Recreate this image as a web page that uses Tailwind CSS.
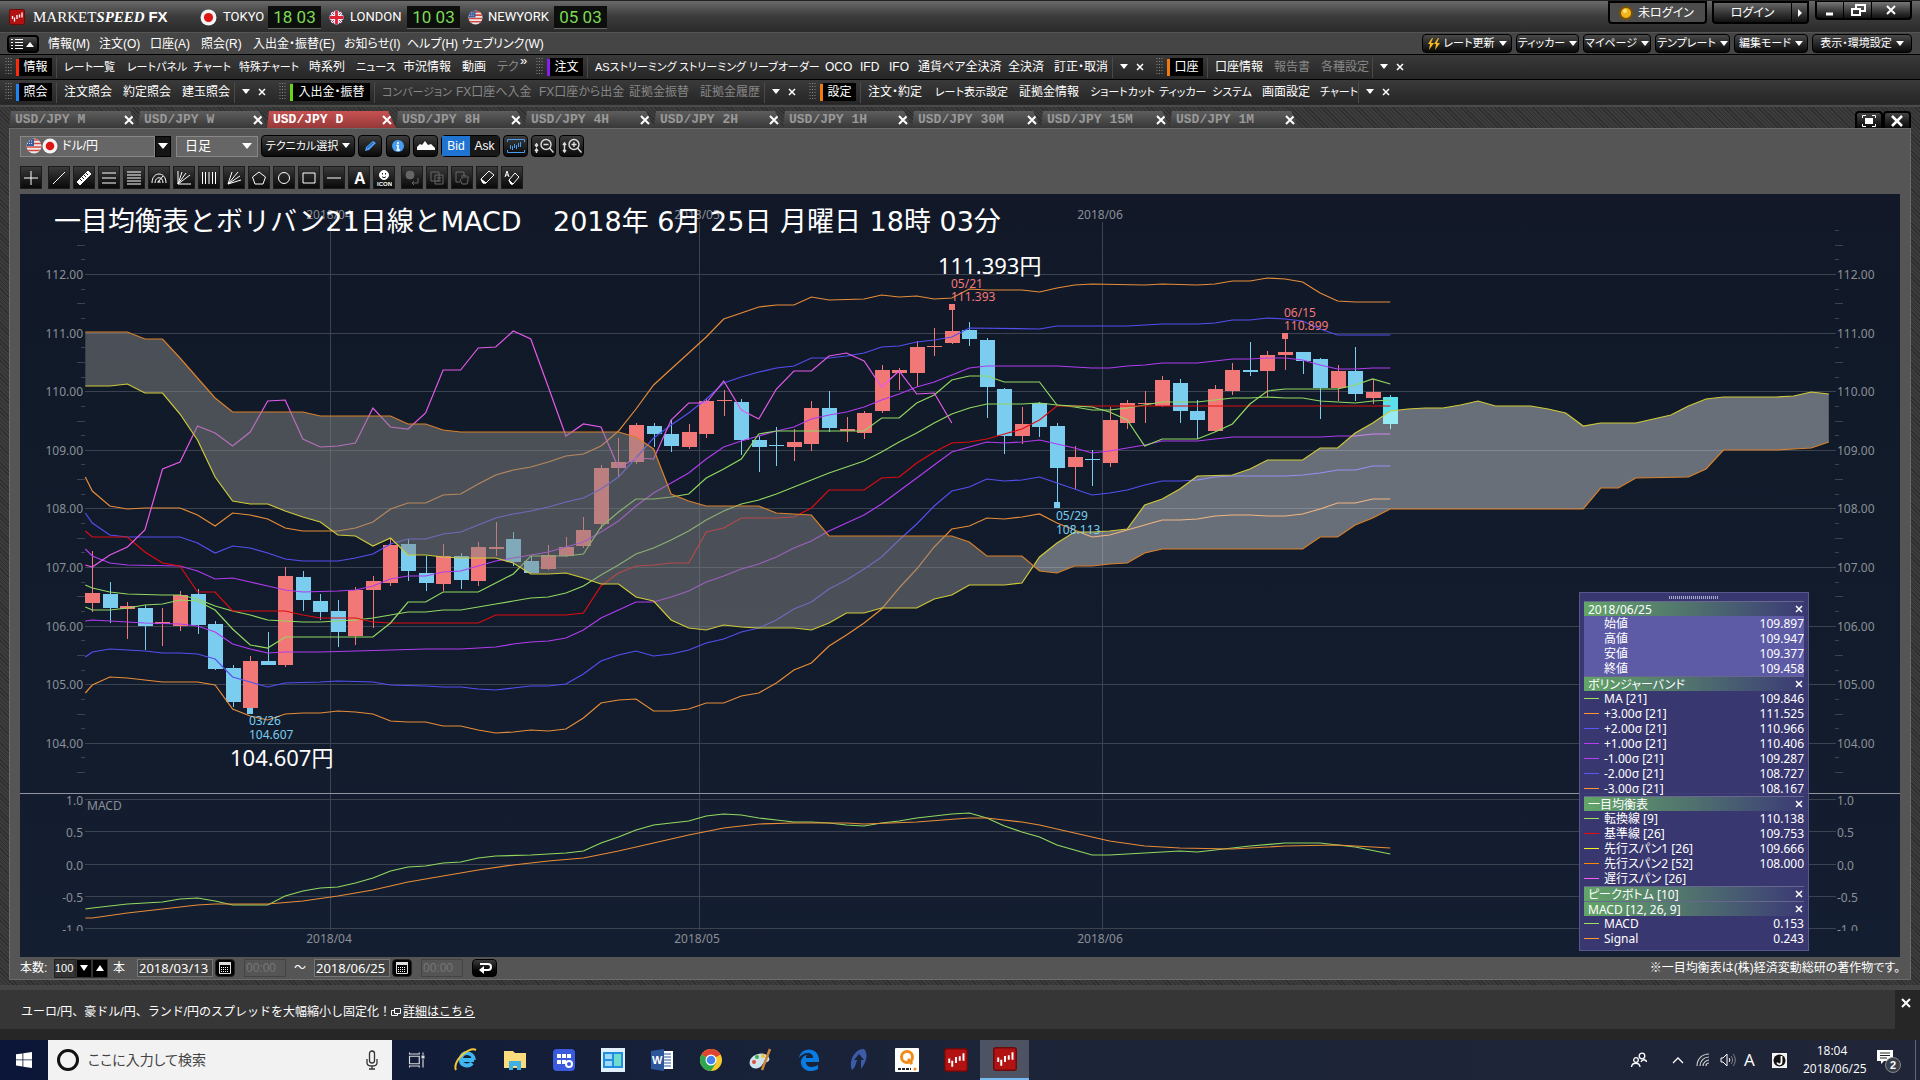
<!DOCTYPE html>
<html lang="ja">
  <head>
    <meta charset="UTF-8" />
    <meta name="viewport" content="width=device-width, initial-scale=1.0" />
    <script src="https://cdn.jsdelivr.net/npm/@tailwindcss/browser@4"></script>
    <title>MARKETSPEED FX</title>
  </head>
  <body
    class="w-full min-h-screen flex flex-col bg-[#2b2b2b] text-white text-xs overflow-hidden font-['Liberation_Sans','Noto_Sans_CJK_JP',sans-serif] [font-feature-settings:'palt']"
  >
    <!-- shared symbols -->
    <svg class="absolute size-0">
      <clipPath id="flagClip"><circle cx="8" cy="8" r="7.5" /></clipPath>
      <symbol id="jp" viewBox="0 0 16 16">
        <circle cx="8" cy="8" r="7.5" fill="#f4f4f4" />
        <circle cx="8" cy="8" r="4.3" fill="#dd1515" />
      </symbol>
      <symbol id="us" viewBox="0 0 16 16">
        <g clip-path="url(#flagClip)">
          <rect width="16" height="16" fill="#f1e9e6" />
          <path d="M0 2h16M0 5.500h16M0 9h16M0 12.500h16" stroke="#cf4a44" stroke-width="1.700" />
          <rect width="8" height="8" fill="#3c5c9c" />
          <path d="M1 3h6M1 5.500h6" stroke="#cfd8ee" stroke-dasharray="1 1" />
        </g>
      </symbol>
      <symbol id="uk" viewBox="0 0 16 16">
        <g clip-path="url(#flagClip)">
          <rect width="16" height="16" fill="#38509c" />
          <path d="M0 0l16 16M16 0L0 16" stroke="#fff" stroke-width="3" />
          <path d="M0 0l16 16M16 0L0 16" stroke="#d23" stroke-width="1" />
          <path d="M8 0v16M0 8h16" stroke="#fff" stroke-width="5" />
          <path d="M8 0v16M0 8h16" stroke="#d23" stroke-width="3" />
        </g>
      </symbol>
      <symbol id="ms" viewBox="0 0 16 16">
        <rect x=".5" y=".5" width="15" height="15" rx="1.5" fill="#b31212" stroke="#6d0b0b" />
        <path d="M3.500 7v3M5.500 8.500v4M8 6v4M10.500 5.500v3M13 3.500v5" stroke="#fff" stroke-width="1.300" />
      </symbol>
      <symbol id="cal" viewBox="0 0 14 14">
        <path d="M1 1h12v3H1z" fill="#ddd" />
        <path d="M1.500 4v8.500h11V4" fill="none" stroke="#ddd" />
        <path d="M3 6.500h8M3 8.500h8M3 10.500h8" stroke="#fff" stroke-dasharray="1 1" />
      </symbol>
    </svg>

    <!-- title bar -->
    <header
      class="h-8 flex items-start justify-between border-t border-[#222] bg-linear-to-b from-[#6a6a6a] via-[#3b3b3b] to-[#2b2b2b]"
    >
      <div class="flex items-center h-8 pl-[9px]">
        <svg class="size-4"><use href="#ms" /></svg>
        <h1 class="w-[175px] pl-2 text-[15px] whitespace-nowrap font-['Liberation_Serif',serif]">
          MARKET<b class="italic">SPEED</b>
          <b class="font-['Liberation_Sans',sans-serif]">FX</b>
        </h1>
        <svg class="size-[17px]"><use href="#jp" /></svg>
        <span class="w-[51px] pl-[6px] text-[13px] font-['Roboto',sans-serif]">TOKYO</span>
        <time class="w-[53px] h-[23px] mr-2 bg-[#0c0f0c] border-b border-[#666] text-[#7ed957] text-[17px] leading-[22px] text-center whitespace-nowrap font-['Roboto',sans-serif]">18 03</time>
        <svg class="size-[15px]"><use href="#uk" /></svg>
        <span class="w-[63px] pl-[6px] text-[13px] font-['Roboto',sans-serif]">LONDON</span>
        <time class="w-[53px] h-[23px] mr-2 bg-[#0c0f0c] border-b border-[#666] text-[#7ed957] text-[17px] leading-[22px] text-center whitespace-nowrap font-['Roboto',sans-serif]">10 03</time>
        <svg class="size-[15px]"><use href="#us" /></svg>
        <span class="w-[71px] pl-[5px] text-[13px] font-['Roboto',sans-serif]">NEWYORK</span>
        <time class="w-[53px] h-[23px] bg-[#0c0f0c] border-b border-[#666] text-[#7ed957] text-[17px] leading-[22px] text-center whitespace-nowrap font-['Roboto',sans-serif]">05 03</time>
      </div>
      <div class="flex items-start pr-2">
        <div class="flex items-center h-[23px] w-[99px] border-2 border-black rounded-b bg-[#4c4c4c] pl-2 gap-1">
          <svg class="size-4" viewBox="0 0 16 16"><circle cx="8" cy="8" r="6" fill="#f2b51c" stroke="#7a5205" stroke-width="2" /><circle cx="7" cy="6" r="2" fill="#ffe07a" /></svg>
          <span class="whitespace-nowrap">未ログイン</span>
        </div>
        <button class="ml-[5px] h-[23px] w-[80px] border-2 border-r border-black rounded-bl bg-linear-to-b from-[#666] to-[#111]">ログイン</button>
        <button class="h-[23px] w-[17px] border-2 border-l-0 border-black rounded-br bg-linear-to-b from-[#666] to-[#111] flex items-center justify-center" aria-label="メニュー">
          <svg class="w-1 h-2" viewBox="0 0 4 8"><path d="M0 0l4 4-4 4z" fill="#fff" /></svg>
        </button>
        <div class="ml-[6px] flex h-[19px] border-2 border-t border-black rounded-b bg-linear-to-b from-[#777] to-[#111]">
          <button class="w-[27px] border-r border-black flex justify-center" aria-label="最小化"><svg class="size-4" viewBox="0 0 16 16"><path d="M4 12h7" stroke="#fff" stroke-width="3" /></svg></button>
          <button class="w-[28px] border-r border-black flex justify-center" aria-label="元に戻す"><svg class="size-4" viewBox="0 0 16 16" fill="none" stroke="#fff" stroke-width="2"><path d="M6 8V3h9v6h-4M2 7h8v6H2z" /></svg></button>
          <button class="w-[38px] flex justify-center" aria-label="閉じる"><svg class="size-4" viewBox="0 0 16 16"><path d="M4 4l8 8M12 4l-8 8" stroke="#fff" stroke-width="2" /></svg></button>
        </div>
      </div>
    </header>

    <!-- menu bar -->
    <div class="h-[22px] flex items-center justify-between pl-[7px] pr-2 border-t border-[#555] bg-[#454545]">
      <nav class="flex items-center" id="menu">
        <button class="w-8 h-[18px] mr-[9px] border-2 border-black rounded bg-linear-to-b from-[#4a4a4a] to-[#0a0a0a] flex items-center justify-center" aria-label="表示">
          <svg class="w-6 h-3" viewBox="0 0 24 12"><path d="M0 1.500h2M4 1.500h8M0 4.500h2M4 4.500h8M0 7.500h2M4 7.500h8M0 10.500h2M4 10.500h8" stroke="#fff" /><path d="M15 9l4-5 4 5z" fill="#fff" /></svg>
        </button>
      </nav>
      <div class="flex gap-1" id="rightMenu"></div>
    </div>

    <!-- tool bars -->
    <div class="h-[25px] flex border-t border-black bg-linear-to-b from-[#3a3a3a] to-[#262626]" id="bar1"></div>
    <div class="h-[25px] flex border-t border-black bg-linear-to-b from-[#3a3a3a] to-[#262626]" id="bar2"></div>

    <!-- chart window -->
    <main class="mt-px px-[9px] pt-1 pb-[5px] border-t-2 border-[#4a4a4a] bg-[repeating-linear-gradient(45deg,#2e2e2e_0_1px,#3c3c3c_1px_3px)]">
      <div class="flex justify-between h-[17px]">
        <div class="flex" id="tabs"></div>
        <div class="flex">
          <button class="w-[28px] border-2 border-b-0 border-black rounded-t bg-linear-to-b from-[#444] to-[#0a0a0a] flex items-center justify-center" aria-label="最大化"><svg class="size-3.5" viewBox="0 0 14 14"><path d="M3 4h8v6H3z" fill="#fff" /><path d="M.5 4V1.500H4M10 1.500h3.500V4M13.500 10v2.500H10M4 12.500H.500V10" fill="none" stroke="#fff" /></svg></button>
          <button class="w-[28px] border-2 border-b-0 border-black rounded-t bg-linear-to-b from-[#444] to-[#0a0a0a] flex items-center justify-center" aria-label="チャートを閉じる"><svg class="size-3" viewBox="0 0 12 12"><path d="M1 1l10 10M11 1L1 11" stroke="#fff" stroke-width="2.500" /></svg></button>
        </div>
      </div>

      <div class="bg-[#555] border border-[#6a6a6a] px-[10px] pt-[6px]">
        <div class="flex items-center h-[22px]">
          <div class="flex items-center w-[135px] h-[21px] border border-[#888] bg-[#666] pl-[5px]">
            <svg class="size-4"><use href="#us" /></svg>
            <svg class="size-4"><use href="#jp" /></svg>
            <select class="appearance-none pl-1 flex-1 h-full outline-none" aria-label="通貨ペア"><option>ドル/円</option></select>
          </div>
          <span class="w-4 h-[21px] bg-[#151515] border border-black flex items-center justify-center"><svg class="w-2.5 h-1.5" viewBox="0 0 10 6"><path d="M0 0h10L5 6z" fill="#fff" /></svg></span>
          <div class="flex items-center ml-[5px] w-[82px] h-[21px] border border-[#888] bg-[#666] pr-[5px]">
            <select class="appearance-none pl-2 flex-1 h-full outline-none text-[13px]" aria-label="足種"><option>日足</option></select>
            <svg class="w-2.5 h-1.5" viewBox="0 0 10 6"><path d="M0 0h10L5 6z" fill="#fff" /></svg>
          </div>
          <button class="ml-[3px] w-[94px] h-[22px] border border-black rounded-sm bg-linear-to-b from-[#3c3c3c] to-[#0a0a0a] flex items-center justify-center gap-1 whitespace-nowrap text-[11px]">テクニカル選択<svg class="w-2 h-1.5" viewBox="0 0 8 6"><path d="M0 0h8L4 5z" fill="#fff" /></svg></button>
          <button class="ml-[3px] w-6 h-[22px] border border-black rounded-sm bg-linear-to-b from-[#3c3c3c] to-[#0a0a0a] flex items-center justify-center" aria-label="描画"><svg class="size-4" viewBox="0 0 16 16"><path d="M3 13l1-4 7-6 3 2-7 7z" fill="#4a9cf0" /><path d="M5 10l6-5" stroke="#1a4f92" /></svg></button>
          <button class="ml-[4px] w-6 h-[22px] border border-black rounded-sm bg-linear-to-b from-[#3c3c3c] to-[#0a0a0a] flex items-center justify-center" aria-label="情報"><svg class="size-4" viewBox="0 0 16 16"><circle cx="8" cy="8" r="6" fill="#4a9cf0" /><path d="M8 4v2M6.500 7.500H8V12M6.500 12h3.500" stroke="#fff" stroke-width="1.600" fill="none" /></svg></button>
          <button class="ml-[3px] w-[25px] h-[22px] border border-black rounded-sm bg-linear-to-b from-[#3c3c3c] to-[#0a0a0a] flex items-center justify-center" aria-label="エリア"><svg class="w-[18px] h-4" viewBox="0 0 18 16"><path d="M0 12V9l3-3 2 1 3-4 3 4 3-1 4 4v2z" fill="#fff" /></svg></button>
          <div class="ml-[3px] flex h-[22px] w-[59px] border border-black rounded-sm">
            <button class="w-[28px] bg-[#1f74d2]">Bid</button>
            <button class="flex-1 bg-[#181818]">Ask</button>
          </div>
          <button class="ml-[3px] w-[25px] h-[22px] border border-black rounded-sm bg-linear-to-b from-[#3c3c3c] to-[#0a0a0a] flex items-center justify-center" aria-label="全体表示"><svg class="w-[18px] h-4" viewBox="0 0 18 16" fill="none" stroke="#4a9cf0"><path d="M.5 4V1.500h17V4M.5 12v2.500h17V12M3.500 7v4M5.500 8v4M7.500 6v4M9.500 7v4M11.500 5v4M13.500 4v5" /></svg></button>
          <button class="ml-[3px] w-[25px] h-[22px] border border-black rounded-sm bg-linear-to-b from-[#3c3c3c] to-[#0a0a0a] flex items-center justify-center" aria-label="縮小"><svg class="w-[20px] h-4" viewBox="0 0 20 16" fill="none" stroke="#ddd" stroke-width="1.400"><circle cx="12" cy="6.500" r="5" /><path d="M9.500 6.500h5M15.500 10l4 4.500M2.500 5v2.500M1 6.500l1.500 2L4 6.500M2.500 15v-3M1 13l1.500-2L4 13" /></svg></button>
          <button class="ml-[3px] w-[25px] h-[22px] border border-black rounded-sm bg-linear-to-b from-[#3c3c3c] to-[#0a0a0a] flex items-center justify-center" aria-label="拡大"><svg class="w-[20px] h-4" viewBox="0 0 20 16" fill="none" stroke="#ddd" stroke-width="1.400"><circle cx="12" cy="6.500" r="5" /><path d="M9.500 6.500h5M12 4v5M15.500 10l4 4.500M2.500 5v9M1 7l1.500-2L4 7M1 12l1.500 2L4 12" /></svg></button>
        </div>

        <div class="flex gap-[3px] mt-[9px] mb-[5px]" id="drawTools"></div>

        <div class="relative">
          <svg id="chart" class="block w-full h-auto font-['Noto_Sans','Noto_Sans_CJK_JP',sans-serif] [font-feature-settings:normal]" viewBox="20 194 1880 763"></svg>
          <table class="absolute right-[91px] bottom-[6px] w-[230px] border-separate border-spacing-0 border border-[#57578c] bg-[#3b3974]/95 px-1 pb-1 leading-[15px] font-['Noto_Sans','Noto_Sans_CJK_JP',sans-serif]">
            <caption class="hidden">2018/06/25</caption>
            <tbody id="legend">
              <tr><td colspan="3" class="h-2 p-0"><svg class="block w-[50px] h-[3px] mx-auto" viewBox="0 0 50 3"><path d="M0 1.500h50" stroke="#aaa9cc" stroke-width="3" stroke-dasharray="1 1" /></svg></td></tr>
            </tbody>
          </table>
        </div>

        <form class="flex items-center h-[22px]" onsubmit="return false">
          <label for="bars" class="w-[34px] whitespace-nowrap">本数:</label>
          <input id="bars" value="100" class="w-[22px] h-[19px] bg-[#333] border border-[#222] text-[11px] outline-none" />
          <button class="w-4 h-[19px] bg-black border border-[#333] flex items-center justify-center" aria-label="減らす"><svg class="size-2" viewBox="0 0 8 8"><path d="M0 1h8L4 7z" fill="#fff" /></svg></button>
          <button class="w-4 h-[19px] bg-black border border-[#333] flex items-center justify-center" aria-label="増やす"><svg class="size-2" viewBox="0 0 8 8"><path d="M0 7h8L4 1z" fill="#fff" /></svg></button>
          <span class="w-[29px] pl-[5px]">本</span>
          <input value="2018/03/13" aria-label="開始日" class="w-[76px] h-[18px] bg-[#444] border border-[#777] pl-px text-[13px] outline-none font-['Noto_Sans',sans-serif]" />
          <button class="ml-[2px] w-5 h-[18px] bg-black border border-[#222] rounded-sm flex items-center justify-center" aria-label="開始日を選択"><svg class="size-3.5"><use href="#cal" /></svg></button>
          <input value="00:00" disabled aria-label="開始時刻" class="ml-[9px] w-[42px] h-[18px] border border-[#444] text-[#777] pl-px outline-none" />
          <span class="w-7 text-center">～</span>
          <input value="2018/06/25" aria-label="終了日" class="w-[76px] h-[18px] bg-[#444] border border-[#777] pl-px text-[13px] outline-none font-['Noto_Sans',sans-serif]" />
          <button class="ml-[2px] w-5 h-[18px] bg-black border border-[#222] rounded-sm flex items-center justify-center" aria-label="終了日を選択"><svg class="size-3.5"><use href="#cal" /></svg></button>
          <input value="00:00" disabled aria-label="終了時刻" class="ml-[9px] w-[42px] h-[18px] border border-[#444] text-[#777] pl-px outline-none" />
          <button class="ml-[9px] w-[25px] h-[18px] bg-linear-to-b from-[#3c3c3c] to-black border border-black rounded-sm flex items-center justify-center" aria-label="適用"><svg class="size-3.5" viewBox="0 0 14 14"><path d="M2 3h8a2.500 2.500 0 010 6H5" fill="none" stroke="#fff" stroke-width="2" /><path d="M6 5v8L1 9z" fill="#fff" /></svg></button>
          <span class="ml-auto whitespace-nowrap">※一目均衡表は(株)経済変動総研の著作物です。</span>
        </form>
      </div>
    </main>

    <!-- news line -->
    <section class="flex-1 flex border-t-[5px] border-b-[11px] border-t-[#454545] border-b-[#262626] bg-[#363636]">
      <p class="flex-1 flex items-center pl-[21px] pt-1 [font-feature-settings:normal]">
        ユーロ/円、豪ドル/円、ランド/円のスプレッドを大幅縮小し固定化！
        <svg class="size-[10px] mr-[2px]" viewBox="0 0 10 10" fill="none" stroke="#fff"><path d="M3.500 1.500h6v5h-6zM3 3.500H.500v5h6V7" /></svg>
        <a href="#" class="underline">詳細はこちら</a>
      </p>
      <button class="w-[25px] pt-2 pr-1 bg-[#262626] flex justify-center" aria-label="お知らせを閉じる"><svg class="size-2.5" viewBox="0 0 10 10"><path d="M1 1l8 8M9 1L1 9" stroke="#fff" stroke-width="2" /></svg></button>
    </section>

    <!-- taskbar -->
    <footer class="h-10 flex items-center bg-linear-to-r from-[#0b1638] via-[#1b2438] to-[#202538]">
      <button class="w-12 flex justify-center" aria-label="スタート"><svg class="size-4" viewBox="0 0 16 16" fill="#fff"><path d="M0 2.300l6.500-.9v6.100H0zM7.300 1.300L16 0v7.500H7.300zM0 8.300h6.500v6.200L0 13.600zM7.300 8.300H16V16l-8.700-1.200z" /></svg></button>
      <label class="w-[344px] h-10 bg-[#f2f2f2] flex items-center pl-2">
        <svg class="size-6" viewBox="0 0 24 24"><circle cx="12" cy="12" r="9.500" fill="none" stroke="#111" stroke-width="3" /></svg>
        <input placeholder="ここに入力して検索" class="flex-1 pl-2 text-[14px] outline-none placeholder:text-[#444]" />
        <svg class="w-4 h-5 mr-3" viewBox="0 0 16 20" fill="none" stroke="#333" stroke-width="1.300"><rect x="5.500" y="1" width="5" height="12" rx="2.500" /><path d="M3 9v4c0 4 10 4 10 0V9M8 16v3M5 19h6" /></svg>
      </label>
      <div class="flex h-10" id="apps"></div>
      <div class="ml-auto flex items-center h-10 border-r border-[#667] mr-1">
        <svg class="w-[18px] h-4 mr-6" viewBox="0 0 18 16" fill="none" stroke="#fff" stroke-width="1.300"><circle cx="12" cy="4" r="2.800" /><path d="M11 10c1-3 5-3 5.500 0" /><circle cx="6" cy="8" r="2.300" /><path d="M1.500 15c.5-5 8-5 8.500 0" /></svg>
        <svg class="w-3 h-2 mr-3" viewBox="0 0 12 8"><path d="M1 7l5-5 5 5" fill="none" stroke="#fff" stroke-width="1.300" /></svg>
        <svg class="size-3.5 mr-2.5" viewBox="0 0 14 14" fill="none" stroke="#ccc" stroke-width="1.200"><path d="M1 13C1 6 6 1 13 1M4 13c0-5 4-9 9-9M7 13c0-3 3-6 6-6M10 13c0-2 1-3 3-3" /></svg>
        <svg class="w-4 h-3.5 mr-2" viewBox="0 0 16 14" fill="none" stroke="#fff"><path d="M1 5h2l4-4v12L3 9H1zM9 5c1 1 1 3 0 4" /><path d="M11 3c2 2 2 6 0 8M13 1c3 3 3 9 0 12" stroke="#888" /></svg>
        <span class="w-7 text-[17px] font-['Open_Sans',sans-serif]">A</span>
        <svg class="size-[15px] mr-4" viewBox="0 0 15 15"><rect width="15" height="15" fill="#f4f4f4" /><circle cx="7.500" cy="7.500" r="6" fill="#111" /><path d="M9.500 3v6c0 3-4 3-4 .5" fill="none" stroke="#fff" stroke-width="1.800" /></svg>
        <div class="w-[58px] text-center leading-[18px] font-['Open_Sans',sans-serif] [font-feature-settings:normal]">18:04<br />2018/06/25</div>
        <svg class="w-6 h-6 ml-4 mr-[14px] mt-1" viewBox="0 0 24 24"><path d="M0 0h16v11H7l-3 3v-3H0z" fill="#fff" /><path d="M3 3h10M3 5.500h10M3 8h7" stroke="#222" /><circle cx="16" cy="15" r="7.500" fill="#3a3f4c" stroke="#888" /><text x="13" y="19" font-size="11" font-weight="bold" fill="#fff">2</text></svg>
      </div>
    </footer>

    <script>
      const $ = (id) => document.getElementById(id);
      const add = (id, html) => $(id).insertAdjacentHTML("beforeend", html);
      const down = '<svg class="w-2 h-1.5 shrink-0" viewBox="0 0 8 6"><path d="M0 0h8L4 5z" fill="#fff"/></svg>';
      const cross = '<svg class="size-2" viewBox="0 0 8 8"><path d="M1 1l6 6M7 1L1 7" stroke="#fff" stroke-width="1.500"/></svg>';

      // menu
      [["情報(M)", 51], ["注文(O)", 51], ["口座(A)", 51], ["照会(R)", 52], ["入出金・振替(E)", 91], ["お知らせ(I)", 63], ["ヘルプ(H)", 55], ["ウェブリンク(W)", 70]].forEach(([t, w]) =>
        add("menu", `<a href="#" class="whitespace-nowrap" style="width:${w}px">${t}</a>`)
      );
      [["レート更新", 90, 1], ["ティッカー", 63], ["マイページ", 68], ["テンプレート", 75], ["編集モード", 74], ["表示・環境設定", 100]].forEach(([t, w, bolt]) =>
        add("rightMenu", `<button class="h-[19px] border border-black rounded-sm bg-linear-to-b from-[#4a4a4a] to-[#0a0a0a] flex items-center justify-center gap-1 whitespace-nowrap text-[11px] leading-none" style="width:${w}px">${bolt ? '<svg class="size-3" viewBox="0 0 12 12"><path d="M4 0L0 6h2L1 12l5-7H3l2-5zM10 0L6 6h2l-1 6 5-7H9l2-5z" fill="#f5b81d"/></svg>' : ""}${t}${down}</button>`)
      );

      // tool bar groups: title, colour, title width, group width, items [label, width, dimmed]
      const bars = {
        bar1: [
          ["情報", "#ff2a0a", 33, 531, [["レート一覧", 63], ["レートパネル", 66], ["チャート", 46], ["特殊チャート", 70], ["時系列", 47], ["ニュース", 47], ["市況情報", 59], ["動画", 35], ["テク", 23, 1]], "more"],
          ["注文", "#8a1cf0", 33, 620, [["ASストリーミング", 84], ["ストリーミング", 70], ["リーブオーダー", 76], ["OCO", 35], ["IFD", 29], ["IFO", 29], ["通貨ペア全決済", 90], ["全決済", 46], ["訂正・取消", 58]]],
          ["口座", "#f07a10", 33, 300, [["口座情報", 59], ["報告書", 47, 1], ["各種設定", 51, 1]]],
        ],
        bar2: [
          ["照会", "#1b86f5", 33, 274, [["注文照会", 59], ["約定照会", 59], ["建玉照会", 52]]],
          ["入出金・振替", "#6ad414", 77, 530, [["コンバージョン", 74, 1], ["FX口座へ入金", 83, 1], ["FX口座から出金", 90, 1], ["証拠金振替", 71, 1], ["証拠金履歴", 64, 1]]],
          ["設定", "#f07a10", 33, 700, [["注文・約定", 67], ["レート表示設定", 84], ["証拠金情報", 71], ["ショートカット", 69], ["ティッカー", 53], ["システム", 50], ["画面設定", 58], ["チャート", 38]]],
        ],
      };
      for (const id in bars)
        bars[id].forEach(([t, color, tw, gw, items, more]) =>
          add(id, `<div class="flex items-center shrink-0 h-full" style="width:${gw}px">
            <svg class="w-[7px] h-[18px] ml-[5px] mr-1" viewBox="0 0 7 18"><path d="M1 0v18M3.500 0v18M6 0v18" stroke="#888" stroke-dasharray="1 2"/></svg>
            <span class="w-[3px] h-[17px]" style="background:${color}"></span>
            <button class="h-[18px] bg-black leading-none text-center whitespace-nowrap" style="width:${tw}px">${t}</button>
            <span class="ml-[4px] mr-[7px] w-px h-[21px] bg-[#4a4a4a]"></span>
            ${items.map(([l, w, dim]) => `<a href="#" class="whitespace-nowrap shrink-0 ${/[ァ-ヶー]{3}/.test(l) ? "text-[11px]" : "text-xs"} ${dim ? "text-[#888]" : "text-white"}" style="width:${w}px">${l}</a>`).join("")}
            ${more ? '<span class="self-start text-[13px] leading-3">»</span>' : `<span class="w-px h-[21px] bg-[#4a4a4a] mr-[7px]"></span>${down}<span class="w-2"></span>${cross}`}
          </div>`)
        );

      // tabs
      ["M", "W", "D", "8H", "4H", "2H", "1H", "30M", "15M", "1M"].forEach((t) =>
        add("tabs", `<div class="flex items-center justify-between w-[129px] pl-[6px] pr-1 [clip-path:polygon(2px_0,121px_0,129px_100%,0_100%)] font-bold ${t == "D" ? "bg-linear-to-b from-[#c85252] to-[#963838] text-white" : "bg-linear-to-b from-[#5e5e5e] to-[#383838] text-[#999]"}">
          <a href="#" class="text-[13px] leading-4 whitespace-nowrap font-['Liberation_Mono',monospace]">USD/JPY ${t}</a>
          <button aria-label="閉じる"><svg class="size-2.5" viewBox="0 0 10 10"><path d="M1 1l8 8M9 1L1 9" stroke="#fff" stroke-width="2"/></svg></button>
        </div>`)
      );

      // drawing tools
      [
        ["十字", '<path d="M8 1v14M1 8h14"/>'],
        ["線", '<path d="M2 14L14 2"/>'],
        ["定規", '<path d="M1 12L12 1l3 3L4 15z" fill="#fff"/><path d="M4 9l2 2M6 7l2 2M8 5l2 2M10 3l2 2" stroke="#222"/>'],
        ["平行線", '<path d="M1 3h14M1 8h14M1 13h14"/>'],
        ["リトレースメント", '<path d="M1 2h14M1 5h14M1 8h14M1 11h14M1 14h14"/>'],
        ["アーク", '<path d="M1 13C1 1 15 1 15 13M4 13c0-7 8-7 8 0M7 13c0-3 2-3 2 0M7 12l5-6"/>'],
        ["ファン", '<path d="M2 1v13h13M2 14L6 2M2 14L10 3M2 14l12-9"/>'],
        ["縦線", '<path d="M1.500 2v12M4.500 2v12M8 2v12M11.500 2v12M14.500 2v12"/>'],
        ["ギャンファン", '<path d="M2 14L6 2M2 14L12 2M2 14l12-8M2 14l13-4"/>'],
        ["多角形", '<path d="M8 2l6.500 5-2.500 7H4L1.500 7z"/>'],
        ["円", '<circle cx="8" cy="8" r="5.500"/>'],
        ["四角", '<path d="M2 3h12v10H2z"/>'],
        ["水平線", '<path d="M1 8h14"/>'],
        ["文字", '<text x="3" y="14" font-size="16" font-weight="bold" fill="#fff" stroke="none">A</text>'],
        ["アイコン", '<circle cx="8" cy="5" r="4.500" fill="#fff"/><path d="M6.500 3v1.500M9.500 3v1.500M6 6.500c1 1.500 3 1.500 4 0" stroke="#222"/><text x="1" y="16" font-size="6" font-weight="bold" fill="#fff" stroke="none">ICON</text>'],
        ["履歴", '<g stroke="#666"><circle cx="6" cy="5" r="4" fill="#666"/><path d="M14 8v5H8M10 11l-2 2 2 2"/></g>'],
        ["複写", '<g stroke="#666"><path d="M2 2h8v9H2zM6 5h8v9H6zM8 8h4M8 11h4"/></g>'],
        ["移動", '<g stroke="#666"><path d="M2 2h8v4M2 2v10h4M6 9l2 5h5l1-4V6M8 9V5M10 8V4M12 8V5"/></g>'],
        ["消しゴム", '<path d="M2 9l8-8 5 4-8 8H4z"/><path d="M2 9l5 4H4z" fill="#fff"/>'],
        ["全消去", '<path d="M5 10l6-7 4 4-6 7H7z"/><path d="M5 10l4 4H7z" fill="#fff"/><path d="M1 7l2-6 2 6M2 5h2"/>'],
      ].forEach(([t, d], i) =>
        add("drawTools", `<button aria-label="${t}" class="w-[22px] h-[23px] border border-[#1c1c1c] bg-linear-to-b from-[#3a3a3a] to-[#0a0a0a] flex items-center justify-center ${i == 0 || i == 14 ? "mr-[3px]" : ""}"><svg class="size-4" viewBox="0 0 16 16" fill="none" stroke="#fff">${d}</svg></button>`)
      );

      // legend
      [
        ["h", "2018/06/25"],
        ["o", "始値", "109.897"], ["o", "高値", "109.947"], ["o", "安値", "109.377"], ["o", "終値", "109.458"],
        ["h", "ボリンジャーバンド"],
        ["#9be15d", "MA [21]", "109.846"], ["#ff9430", "+3.00σ [21]", "111.525"], ["#5a55f5", "+2.00σ [21]", "110.966"], ["#b83cf5", "+1.00σ [21]", "110.406"],
        ["#b83cf5", "-1.00σ [21]", "109.287"], ["#5a55f5", "-2.00σ [21]", "108.727"], ["#ff9430", "-3.00σ [21]", "108.167"],
        ["h", "一目均衡表"],
        ["#9be15d", "転換線 [9]", "110.138"], ["#f00808", "基準線 [26]", "109.753"], ["#f5ee20", "先行スパン1 [26]", "109.666"], ["#ff8800", "先行スパン2 [52]", "108.000"], ["#f55af5", "遅行スパン [26]", ""],
        ["h", "ピークボトム [10]"], ["h", "MACD [12, 26, 9]"],
        ["#9be15d", "MACD", "0.153"], ["#ff9430", "Signal", "0.243"],
      ].forEach(([k, t, v]) =>
        add("legend", k == "h"
          ? `<tr><th colspan="3" class="h-[15px] p-0 font-normal"><div class="flex items-center justify-between h-[15px] pl-1 pr-px border-t border-[#66668e] bg-linear-to-r from-[#63a566] via-[#50706e] to-[#3b3974]"><span>${t}</span><button aria-label="閉じる">${cross}</button></div></th></tr>`
          : `<tr class="${k == "o" ? "bg-[#5d5ba6]" : ""}"><td class="w-5 p-0">${k == "o" ? "" : `<svg class="block w-[15px] h-px" viewBox="0 0 15 1"><path d="M0 .5h15" stroke="${k}"/></svg>`}</td><td class="h-[15px] p-0 whitespace-nowrap">${t}</td><td class="p-0 text-right">${v}</td></tr>`)
      );

      // chart
      const X = (i) => 92.3 + 17.54 * i;
      const pts = (s) => s.trim().split(" ").map((p) => p.split(",").map(Number)).map(([i, y]) => [+X(i).toFixed(1), y]);
      const line = (s, c) => `<polyline points="${pts(s).join(" ")}" fill="none" stroke="${c}" stroke-width="1.200"/>`;
      const spanA = "-.4,386 1,386 2,384 3,393 4,393 5,414 6,440 7,477 8,501 9,504 10,504 11,511 12,517 13,522 14,535 15,536 16,546 17,538 18,555 19,555 20,557 21,558 23,558 24,563 25,574 26,574 27,573 28,578 29,584 30,584 31,597 32,601 33,620 34,628 35,630 36,625 37,627 38,628 40,628 41,630 42,623 43,613 44,613 45,608 47,608 48,599 49,595 50,585 52,585 53,583 ";
      const spanA2 = "54,557 55,543 56,532 57,532 58,531 59,529 60,505 61,499 62,489 63,476 65,475 66,469 67,460 69,460 70,448 71,448 72,433 73,423 74,411 75,409 76,408 77,408 78,405 79,401 80,406 82,406 83,409 84,413 85,426 86,423 88,423 89,419 90,415 91,406 92,399 93,397 96,397 97,396 98,392 99,394";
      const spanB = "-.4,332 2,332 3,339 4,339 5,358 6,378 7,398 8,412 12,412 13,416 17,416 18,424 19,424 20,430 21,432 30,432 31,437 32,449 33,494 34,501 35,506 38,506 39,513 40,514 41,515 42,536 49,536 50,542 51,556 53,556 ";
      const spanB2 = "54,571 55,573 56,566 57,566 58,564 59,563 60,553 61,549 69,549 70,537 71,537 72,525 73,518 74,509 85,509 86,488 87,488 88,478 91,477 92,469 93,450 96,450 97,449 98,448 99,442";
      // cross point of the two spans
      const mid = "53.66,566 ";
      const cloud = (a, b, c, o) => `<polygon points="${[...pts(a), ...pts(b).reverse()].join(" ")}" fill="${c}" fill-opacity="${o}"/>`;

      // body top, body bottom, high, low, up?
      const candles = "593,603,551,612,1 594,608,582,623,0 606,609,602,639,1 608,626,605,650,0 622,624,608,646,1 595,626,591,631,1 594,625,589,634,0 624,669,621,670,0 668,702,665,707,0 661,708,656,708,1 661,665,632,665,0 576,665,567,667,1 577,600,571,611,0 601,612,594,620,0 611,632,600,647,0 590,636,587,645,1 581,590,576,628,1 545,583,538,586,1 544,571,539,581,0 573,583,556,591,0 556,584,544,591,1 556,580,553,589,0 547,581,542,586,1 547,549,522,556,1 539,562,532,566,0 561,573,556,573,0 555,569,545,570,1 547,556,537,557,1 530,546,517,548,1 468,524,465,529,1 462,468,438,477,1 425,462,423,464,1 426,434,423,447,0 434,446,419,452,0 432,447,424,449,1 401,434,398,438,1 400,401,390,416,1 402,440,399,455,0 440,447,436,472,0 445,446,427,466,0 442,447,429,461,1 408,444,401,451,1 408,428,391,432,0 429,431,417,442,1 413,433,411,439,1 370,411,365,413,1 370,373,368,390,1 347,373,341,387,1 346,347,328,356,1 331,343,305,344,1 330,339,322,346,0 340,387,338,418,0 389,436,388,454,0 424,436,407,444,1 403,427,402,437,0 426,468,423,503,0 457,467,446,489,1 459,460,450,486,0 420,463,407,467,1 403,423,400,429,1 403,404,391,423,1 380,406,376,407,1 383,411,379,423,0 411,420,400,439,0 389,431,385,432,1 370,391,363,395,1 370,372,342,376,0 355,371,351,397,1 352,355,336,370,1 352,361,352,374,0 359,388,358,419,0 371,388,365,401,1 371,394,347,401,0 392,398,379,404,1 397,424,395,429,0";

      let s = `<defs><linearGradient id="bg" x2="0" y2="1"><stop offset="0" stop-color="#121828"/><stop offset=".3" stop-color="#101a29"/><stop offset=".7" stop-color="#121c2d"/><stop offset="1" stop-color="#141e31"/></linearGradient></defs>
        <rect x="20" y="194" width="1880" height="763" fill="url(#bg)"/>`;

      // grid and scales
      const t = (x, y, txt, c, size, anchor) => `<text x="${x}" y="${y}" fill="${c}" font-size="${size}" text-anchor="${anchor || "start"}">${txt}</text>`;
      const grey = "#8b8f96";
      for (let k = 0; k <= 8; k++) {
        const y = Math.round(274 + 58.6 * k) + 0.5;
        s += `<path d="M85 ${y}H1836" stroke="#3b4250"/>` + t(83, y + 4, 112 - k + ".00", grey, 12, "end") + t(1837, y + 4, 112 - k + ".00", grey, 12);
      }
      for (let k = -3; k <= 34; k++) {
        if (k % 4 == 0) continue;
        const y = Math.round(274 + 14.65 * k) + 0.5;
        const w = k % 2 ? 4 : 8;
        s += `<path d="M${85 - w} ${y}H85M1835 ${y}h${w}" stroke="#3b4250"/>`;
      }
      ["1.0", "0.5", "0.0", "-0.5", "-1.0"].forEach((v, k) => {
        const y = Math.round(799 + 32.3 * k) + 0.5;
        s += `<path d="M85 ${y}H1836" stroke="#3b4250"/>` + t(83, y + 5, v, grey, 12, "end") + t(1837, y + 5, v, grey, 12);
      });
      s += '<rect x="45" y="931" width="40" height="5" fill="#141e31"/><rect x="1837" y="931" width="40" height="5" fill="#141e31"/>';
      s += '<path d="M330.500 222V930M699.500 222V930M1102.500 222V930" stroke="#3b4250"/>';
      [[329, "2018/04"], [697, "2018/05"], [1100, "2018/06"]].forEach(([x, v]) => (s += t(x, 219, v, grey, 12, "middle") + t(x, 943, v, grey, 12, "middle")));
      s += '<path d="M20 793.500H1900" stroke="#9294a0"/>' + t(87, 810, "MACD", grey, 12);

      candles.split(" ").forEach((c, i) => {
        const [a, b, hi, lo, up] = c.split(",").map(Number);
        const col = up ? "#f27878" : i == 74 ? "#5be0ec" : "#7acdee";
        const x = Math.round(X(i));
        s += `<path d="M${x}.5 ${hi}V${lo}" stroke="${col}"/><rect x="${x - 7}" y="${a}" width="15" height="${Math.max(1, b - a)}" fill="${col}"/>`;
      });

      // -3s, -2s, -1s, MA, +1s, +2s, +3s
      s += line("-.4,693 0,685 1,677 2,678 3,680 4,682 6,682 7,685 8,709 9,716 10,720 11,714 12,713 13,713 14,711 15,712 16,714 17,721 18,722 19,722 20,726 21,726 22,730 23,733 24,732 25,730 26,731 27,729 28,718 29,703 30,700 31,699 32,711 33,711 34,709 35,703 36,703 37,696 38,693 39,683 40,670 41,663 42,646 43,635 44,623 45,609 46,588 47,569 48,547 49,529 50,526 51,518 52,519 53,517 54,514 55,523 56,530 57,537 58,535 59,530 60,525 61,520 62,520 63,519 64,516 65,515 66,515 67,516 68,516 69,514 70,509 71,503 72,503 73,499 74,499", "#e88c38");
      s += line("-.4,657 0,652 1,649 2,650 3,651 4,653 5,653 6,654 7,659 8,677 9,682 10,687 11,683 13,682 14,681 16,682 17,685 19,686 20,687 21,687 22,689 23,690 24,688 25,686 26,686 27,684 28,674 29,661 30,655 31,651 32,656 33,654 34,650 35,643 36,639 37,632 38,628 39,620 40,609 41,602 42,589 43,580 44,569 45,557 46,540 47,524 48,506 49,491 50,487 51,479 52,481 53,480 54,477 55,483 56,489 57,495 58,493 59,490 60,485 61,481 62,481 63,480 64,477 65,476 68,476 69,475 70,473 71,470 72,470 73,466 74,466", "#544ff0");
      s += line("-.4,621 0,620 1,621 2,622 3,623 5,624 6,626 7,632 8,644 9,649 10,653 11,652 13,652 15,651 17,650 19,649 21,649 22,648 23,647 24,644 25,642 26,641 27,638 28,630 29,618 30,610 31,602 32,602 33,597 34,591 35,582 36,576 37,569 38,564 39,557 40,548 41,541 42,531 43,523 44,515 45,504 46,491 47,478 48,465 49,452 50,447 51,442 52,443 53,442 54,440 55,444 56,448 57,453 58,451 59,448 60,445 61,441 63,441 64,439 65,437 70,437 71,436 72,436 73,434 74,434", "#b03cf0");
      s += line("-.4,585 0,588 1,592 2,594 4,595 5,595 6,599 7,606 8,611 9,615 10,620 11,621 12,622 13,622 14,621 15,620 16,618 17,615 18,612 19,612 20,610 21,610 22,607 23,604 24,601 25,598 26,597 27,593 28,586 29,575 30,565 31,554 32,548 33,540 34,531 35,520 36,511 37,504 38,500 39,494 40,487 41,480 42,473 43,467 44,461 45,452 46,442 47,433 48,423 49,414 50,408 51,404 53,404 54,403 55,405 56,407 57,410 58,410 59,408 60,405 61,402 63,402 64,400 65,398 66,398 67,397 68,398 69,398 70,401 71,402 72,403 73,401 74,400", "#92d860");
      s += line("-.4,549 0,556 1,563 2,565 5,566 6,571 7,579 8,578 9,582 10,586 11,590 12,592 14,591 15,590 16,586 17,579 18,576 19,576 20,572 21,571 22,566 23,561 24,558 25,555 26,552 27,547 28,542 29,532 30,521 31,506 32,493 33,483 34,473 35,459 36,447 37,441 38,436 39,431 40,427 41,419 42,415 43,412 44,407 45,400 46,394 47,387 48,382 49,375 50,368 51,366 55,366 57,368 58,368 59,366 60,365 61,363 63,363 64,361 65,359 66,359 67,358 68,358 69,360 70,365 71,369 72,369 73,368 74,368", "#b03cf0");
      s += line("-.4,513 0,523 1,535 2,537 5,537 6,543 7,553 8,546 9,548 10,553 11,559 12,561 14,561 15,558 16,554 17,544 18,539 19,539 20,534 21,532 22,525 23,518 24,514 25,511 26,507 27,502 28,498 29,489 30,477 31,458 32,438 33,425 34,413 35,399 36,383 37,377 38,372 39,368 40,366 41,358 42,358 43,356 44,353 45,347 46,346 47,342 48,340 49,337 50,328 54,329 55,326 59,326 60,325 61,324 63,324 64,323 65,320 66,320 67,318 68,319 69,321 70,329 71,335 74,335", "#544ff0");
      s += line("-.4,477 0,491 1,506 2,509 3,508 5,508 6,515 7,526 8,513 9,515 10,519 11,528 12,531 14,531 15,528 16,522 17,509 18,503 19,503 20,495 21,494 22,484 23,475 24,470 25,467 26,462 27,456 28,454 29,446 30,431 31,409 32,385 33,369 34,353 35,337 36,319 37,313 38,307 39,305 40,305 41,297 42,300 44,299 45,295 46,297 47,296 48,299 49,298 50,289 51,290 53,290 54,292 55,288 56,285 57,284 60,285 61,284 63,285 64,284 65,281 66,281 67,278 68,279 69,282 70,293 71,301 72,302 74,302", "#e88c38");
      // base line, conversion line, lagging span
      s += line("-.4,531 0,537 2,537 3,552 4,563 5,566 6,592 7,592 8,611 11,611 12,615 13,618 15,618 16,622 17,623 22,623 23,615 27,615 28,613 29,586 30,573 31,566 32,565 33,563 34,563 35,532 36,528 37,518 39,518 40,517 41,508 42,490 44,490 45,478 46,477 47,463 48,452 49,443 50,442 51,439 52,434 53,429 54,420 55,406 74,406", "#e00c10");
      s += line("-.4,607 0,610 1,610 2,608 3,605 4,604 5,600 6,601 7,610 8,629 9,645 10,648 11,637 16,637 17,623 18,602 19,602 20,592 22,592 23,583 24,574 25,556 27,556 28,554 29,527 30,512 31,499 32,499 33,497 34,494 35,478 36,469 37,459 38,434 39,431 44,431 45,418 46,418 47,403 48,395 49,380 50,376 51,376 52,382 54,382 55,405 57,407 58,412 59,420 60,446 61,439 63,439 64,432 65,424 66,404 67,391 68,389 71,389 72,385 73,379 74,384", "#92d860");
      s += line("-.4,565 0,567 1,555 2,547 3,530 4,469 5,462 6,426 7,433 8,446 9,432 10,401 11,400 12,439 13,447 14,446 15,443 16,408 17,427 18,429 19,413 20,370 21,370 22,348 23,347 24,331 25,339 26,387 27,436 28,424 29,427 30,468 31,458 32,459 33,420 34,403 35,403 36,381 37,410 38,419 39,389 40,371 41,371 42,356 43,353 44,361 45,387 46,371 47,394 48,393 49,423", "#e45ae8");
      // cloud
      s += cloud(spanA + mid, spanB + mid, "#868686", 0.5) + cloud(mid + spanA2, mid + spanB2, "#fafafa", 0.38);
      s += line(spanA + spanA2, "#cfc93a") + line(spanB + spanB2, "#d9802a");
      // MACD, signal
      s += line("-.4,909 0,908 2,904 4,902 5,899 6,898 7,901 8,905 10,905 11,896 12,891 13,888 14,887 15,883 16,878 17,871 18,867 19,866 20,863 21,862 22,858 23,856 25,855 27,853 28,851 29,843 30,837 31,830 32,825 33,823 34,821 35,816 36,814 37,815 38,818 39,820 40,822 41,822 42,823 43,825 44,826 45,823 46,821 47,818 48,816 49,814 50,813 51,818 52,826 53,832 54,837 55,845 56,850 57,855 58,855 60,853 62,851 63,852 64,850 66,846 68,843 70,843 71,845 72,847 74,854", "#92d860");
      s += line("-.4,918 0,918 2,913 4,909 6,905 7,904 10,904 12,901 14,896 16,890 18,882 20,876 22,870 24,865 26,861 28,858 30,851 32,843 34,835 36,828 38,824 40,823 43,823 44,824 47,822 50,818 51,818 53,822 54,825 56,833 58,841 60,846 62,848 65,849 68,846 71,845 74,848", "#e88c38");

      // peaks and bottoms
      [[250, 708, "03/26", "104.607", "#7acdee", 725, 739], [1057, 502, "05/29", "108.113", "#7acdee", 520, 534], [952, 304, "05/21", "111.393", "#f27878", 288, 301], [1285, 333, "06/15", "110.899", "#f27878", 317, 330]].forEach(([x, y, d, v, c, y1, y2]) => {
        s += `<rect x="${x - 3}" y="${y}" width="6" height="6" fill="${c}"/>` + t(x - 1, y1, d, c, 12) + t(x - 1, y2, v, c, 12);
      });
      s += `<g class="font-['DejaVu_Sans','Noto_Sans_CJK_JP',sans-serif]">` + t(54, 231, "一目均衡表とボリバン21日線とMACD", "#fff", 27) + t(553, 231, "2018年 6月 25日 月曜日 18時 03分", "#fff", 27) + "</g>";
      s += t(938, 274, "111.393円", "#fff", 22) + t(230, 766, "104.607円", "#fff", 22);
      $("chart").innerHTML = s;

      // taskbar apps
      [
        '<path d="M2 7h13v10H2zM2 2v2h13V2M2 22v-2h13v2M20 2v3M20 11v11" fill="none" stroke="#ddd" stroke-width="1.500"/><path d="M18 6h4v4h-4z" fill="#ddd"/>',
        '<path d="M20 12H7c0 6 8 7 11 3M7 11c0-8 12-8 13 1" fill="none" stroke="#3fb6f0" stroke-width="4"/><path d="M2 22C-2 14 14-2 22 2" fill="none" stroke="#f2c832" stroke-width="2"/>',
        '<path d="M1 3h9l2 2h11v15H1z" fill="#fbdc7c"/><path d="M6 22v-9h12v9h-4v-4h-4v4z" fill="#3fb0e6"/>',
        '<rect x="1" y="1" width="22" height="22" rx="4" fill="#3a5be0"/><path d="M5 6h4v4H5zM10 6h4v4h-4zM15 6h4v4h-4zM5 12h4v4H5zM10 12h4v4h-4z" fill="#fff"/><circle cx="17" cy="16" r="3" fill="none" stroke="#fff" stroke-width="2"/>',
        '<rect width="24" height="24" fill="#dff0fc"/><path d="M2 4h20v16H2z" fill="#1f8fe4"/><path d="M4 6h7v5H4zM4 13h7v5H4z" fill="#9fd8fb"/><path d="M13 6h7v12h-7z" fill="#6fdccb"/>',
        '<path d="M12 3h11v18H12z" fill="#fff"/><path d="M14 6h7M14 9h7M14 12h7M14 15h7M14 18h7" stroke="#2b579a"/><path d="M1 3l13-2v22L1 21z" fill="#2b579a"/><text x="2" y="16" font-size="11" font-weight="bold" fill="#fff">W</text>',
        '<circle cx="12" cy="12" r="11" fill="#f7c92c"/><path d="M12 12L2.500 6.500A11 11 0 0121.500 6.500z" fill="#df4433"/><path d="M12 12L2.500 6.500A11 11 0 0012 23l5-8z" fill="#2da650"/><circle cx="12" cy="12" r="5.500" fill="#fff"/><circle cx="12" cy="12" r="4.300" fill="#4483ee"/>',
        '<path d="M2 17C-1 8 14 2 20 8c5 7-5 6-6 9s-9 6-12 0z" fill="#cfe3ee"/><circle cx="6" cy="14" r="2" fill="#e04c3c"/><circle cx="9" cy="9" r="2" fill="#3fae49"/><circle cx="15" cy="8" r="2" fill="#f1c232"/><path d="M22 1L14 22" stroke="#c78638" stroke-width="2.500"/>',
        '<path d="M2 10C4-2 22-1 22 12v2H9c0 6 7 6 12 3v4C12 26 3 21 4 13c1-4 4-6 6-6-1 1-1 2-1 3h7c0-7-10-6-14 0z" fill="#0a7be0"/>',
        '<path d="M6 22C2 12 10 0 18 1c5 5 2 14-3 20V12h3l-5-6-5 6h3c-1 4-2 8-5 10z" fill="#3d5ba8"/>',
        '<rect width="24" height="24" rx="1" fill="#fff"/><circle cx="12" cy="9" r="5.500" fill="none" stroke="#f08c1a" stroke-width="3"/><path d="M13 11l4 5" stroke="#f08c1a" stroke-width="3"/><path d="M3 21h13" stroke="#222" stroke-width="2" stroke-dasharray="3 1"/><circle cx="20" cy="21" r="1.500" fill="#f08c1a"/>',
        '<use href="#ms"/>',
        '<use href="#ms"/>',
      ].forEach((d, i) =>
        add("apps", `<button aria-label="アプリ" class="w-[49px] h-10 flex items-center justify-center ${i == 12 ? "bg-[#4d5362] border-b-2 border-[#76b9f0]" : ""}"><svg class="${i == 0 ? "w-[18px] h-5" : "size-6"}" viewBox="0 0 24 24">${d}</svg></button>`)
      );
    </script>
  </body>
</html>
